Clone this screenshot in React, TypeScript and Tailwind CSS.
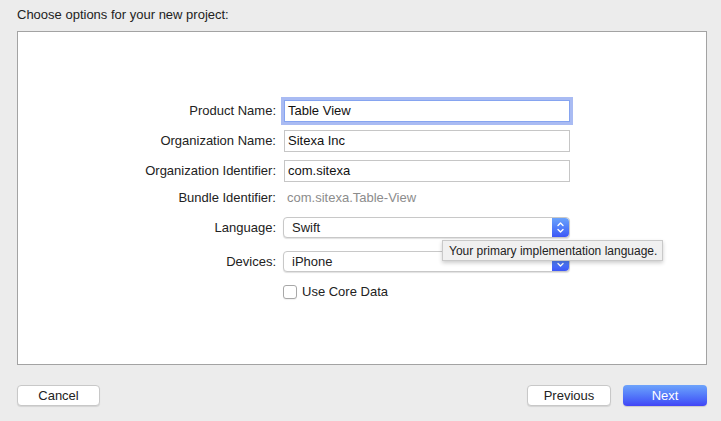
import React from 'react';

const font = { fontFamily: '"Liberation Sans", Arial, sans-serif' };

function Label({ children }: { children: React.ReactNode }) {
  return <div className="w-[258px] shrink-0 text-right text-[13px] text-[#222]">{children}</div>;
}

function Stepper({ both = true }: { both?: boolean }) {
  return (
    <div className="flex h-full w-[17px] flex-col items-center justify-center rounded-r-[4px] bg-gradient-to-b from-[#6ba2fb] to-[#3e56f6]">
      <svg width="9" height="13" viewBox="0 0 9 13" fill="none" stroke="white" strokeWidth="1.4" strokeLinecap="round" strokeLinejoin="round">
        {both && <path d="M2 4.5 L4.5 2 L7 4.5" />}
        <path d="M2 8.5 L4.5 11 L7 8.5" />
      </svg>
    </div>
  );
}

function Popup({ value }: { value: string }) {
  return (
    <div className="ml-[7px] flex h-[21px] w-[287px] items-center rounded-[4px] border border-[#c8c8c8] bg-white shadow-[0_1px_1px_rgba(0,0,0,0.12)]">
      <span className="flex-1 pl-[8px] text-[13px] text-[#222]">{value}</span>
      <Stepper />
    </div>
  );
}

export default function App() {
  return (
    <div className="h-[421px] w-[721px] bg-[#ececec]" style={font}>
      <div className="pl-[17px] pt-[7px] text-[13px] leading-[16px] text-[#222]">Choose options for your new project:</div>

      <div className="relative ml-[17px] mt-[8px] h-[334px] w-[690px] border border-[#a3a3a3] bg-white">
        <div className="flex flex-col pt-[68px]">
          {/* Product name (focused) */}
          <div className="flex h-[22px] items-center">
            <Label>Product Name:</Label>
            <div className="ml-[8px] flex h-[22px] w-[286px] items-center border border-[#86a4f0] bg-white pl-[3px] text-[13px] text-[#111] ring-[3px] ring-[#a9bbf3]">
              Table View
            </div>
          </div>

          <div className="mt-[8px] flex h-[22px] items-center">
            <Label>Organization Name:</Label>
            <div className="ml-[8px] flex h-[22px] w-[286px] items-center border border-[#c6c6c6] bg-white pl-[3px] text-[13px] text-[#111]">
              Sitexa Inc
            </div>
          </div>

          <div className="mt-[8px] flex h-[22px] items-center">
            <Label>Organization Identifier:</Label>
            <div className="ml-[8px] flex h-[22px] w-[286px] items-center border border-[#c6c6c6] bg-white pl-[3px] text-[13px] text-[#111]">
              com.sitexa
            </div>
          </div>

          <div className="mt-[8px] flex h-[16px] items-center">
            <Label>Bundle Identifier:</Label>
            <span className="ml-[11px] text-[13px] text-[#8c8c8c]">com.sitexa.Table-View</span>
          </div>

          <div className="mt-[11px] flex h-[21px] items-center">
            <Label>Language:</Label>
            <Popup value="Swift" />
          </div>

          <div className="mt-[13px] flex h-[21px] items-center">
            <Label>Devices:</Label>
            <Popup value="iPhone" />
          </div>

          <div className="mt-[12px] flex h-[16px] items-center pl-[265px]">
            <div className="h-[14px] w-[14px] rounded-[3px] border border-[#a8a8a8] bg-white shadow-[0_1px_1px_rgba(0,0,0,0.06)]" />
            <span className="ml-[5px] text-[13px] text-[#222]">Use Core Data</span>
          </div>
        </div>

        {/* tooltip */}
        <div className="absolute left-[424px] top-[208px] flex h-[21px] w-[221px] items-center border border-[#c9c9c9] bg-[#f0f0f0] pl-[6px] text-[12px] text-[#222] shadow-[0_2px_4px_rgba(0,0,0,0.2)]">
          Your primary implementation language.
        </div>
      </div>

      <div className="mt-[20px] flex items-center pl-[17px] pr-[14px]">
        <button className="h-[21px] w-[83px] rounded-[4px] border border-[#c8c8c8] bg-white text-[13px] text-[#222] shadow-[0_1px_1px_rgba(0,0,0,0.1)]">
          Cancel
        </button>
        <div className="flex-1" />
        <button className="h-[21px] w-[84px] rounded-[4px] border border-[#c8c8c8] bg-white text-[13px] text-[#222] shadow-[0_1px_1px_rgba(0,0,0,0.1)]">
          Previous
        </button>
        <button className="ml-[12px] h-[21px] w-[84px] rounded-[4px] bg-gradient-to-b from-[#6ea3fb] to-[#4243f6] text-[13px] text-white shadow-[0_1px_1px_rgba(0,0,0,0.15)]">
          Next
        </button>
      </div>
    </div>
  );
}
